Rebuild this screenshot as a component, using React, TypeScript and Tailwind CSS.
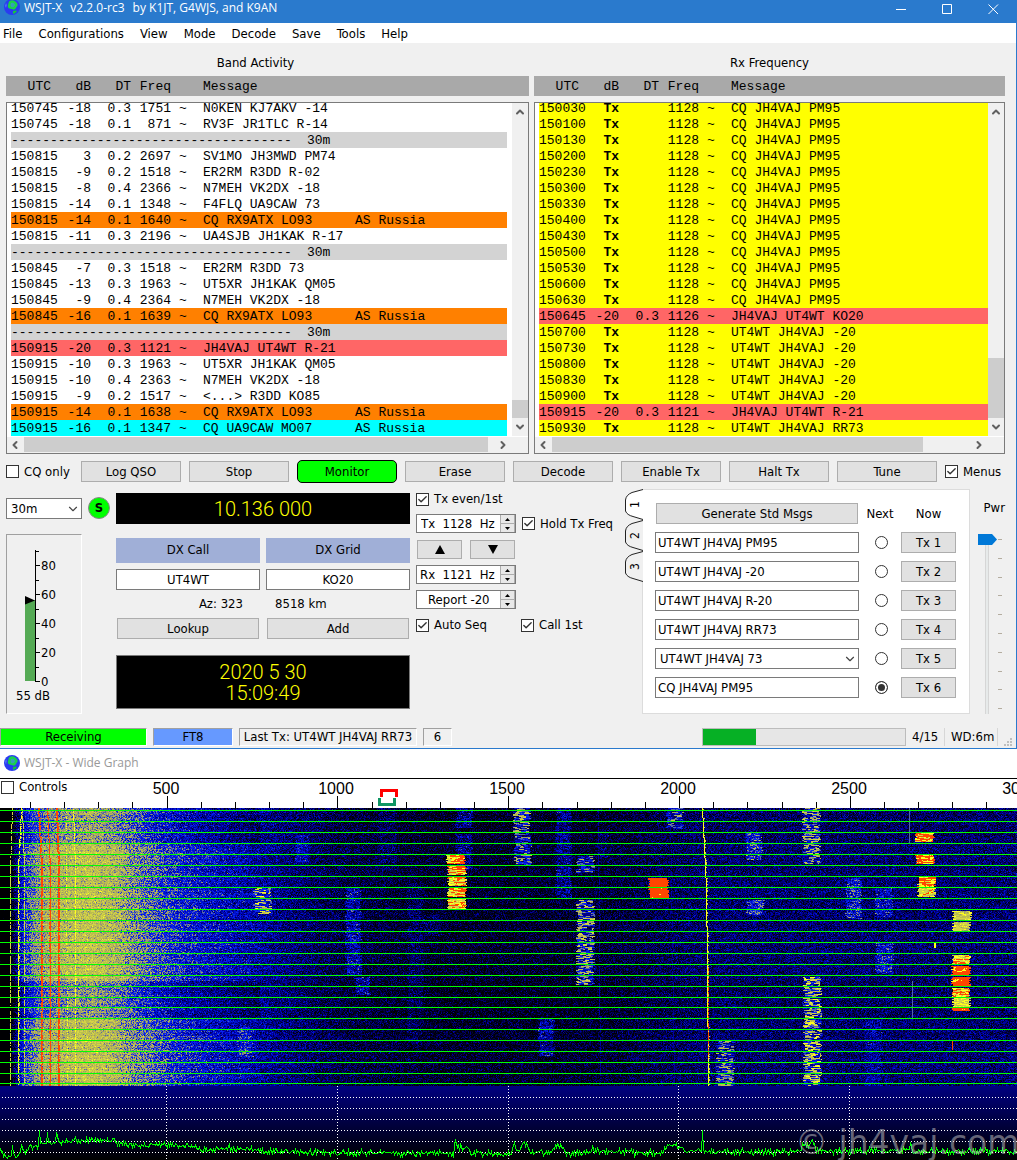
import { useMemo } from "react";
import type { ReactNode } from "react";
import { Check, ChevronDown, ChevronLeft, ChevronRight, ChevronUp } from "lucide-react";
import clsx from "clsx";

type Decode = {
  utc: string;
  db: string;
  dt: string;
  freq: string;
  msg: string;
  country?: string;
  tone?: "cq" | "mine" | "new" | "tx";
};

const BAND: (Decode | null)[] = [
  { utc: "150745", db: "-18", dt: "0.3", freq: "1751", msg: "N0KEN KJ7AKV -14" },
  { utc: "150745", db: "-18", dt: "0.1", freq: "871", msg: "RV3F JR1TLC R-14" },
  null,
  { utc: "150815", db: "3", dt: "0.2", freq: "2697", msg: "SV1MO JH3MWD PM74" },
  { utc: "150815", db: "-9", dt: "0.2", freq: "1518", msg: "ER2RM R3DD R-02" },
  { utc: "150815", db: "-8", dt: "0.4", freq: "2366", msg: "N7MEH VK2DX -18" },
  { utc: "150815", db: "-14", dt: "0.1", freq: "1348", msg: "F4FLQ UA9CAW 73" },
  { utc: "150815", db: "-14", dt: "0.1", freq: "1640", msg: "CQ RX9ATX LO93", country: "AS Russia", tone: "cq" },
  { utc: "150815", db: "-11", dt: "0.3", freq: "2196", msg: "UA4SJB JH1KAK R-17" },
  null,
  { utc: "150845", db: "-7", dt: "0.3", freq: "1518", msg: "ER2RM R3DD 73" },
  { utc: "150845", db: "-13", dt: "0.3", freq: "1963", msg: "UT5XR JH1KAK QM05" },
  { utc: "150845", db: "-9", dt: "0.4", freq: "2364", msg: "N7MEH VK2DX -18" },
  { utc: "150845", db: "-16", dt: "0.1", freq: "1639", msg: "CQ RX9ATX LO93", country: "AS Russia", tone: "cq" },
  null,
  { utc: "150915", db: "-20", dt: "0.3", freq: "1121", msg: "JH4VAJ UT4WT R-21", tone: "mine" },
  { utc: "150915", db: "-10", dt: "0.3", freq: "1963", msg: "UT5XR JH1KAK QM05" },
  { utc: "150915", db: "-10", dt: "0.4", freq: "2363", msg: "N7MEH VK2DX -18" },
  { utc: "150915", db: "-9", dt: "0.2", freq: "1517", msg: "<...> R3DD KO85" },
  { utc: "150915", db: "-14", dt: "0.1", freq: "1638", msg: "CQ RX9ATX LO93", country: "AS Russia", tone: "cq" },
  { utc: "150915", db: "-16", dt: "0.1", freq: "1347", msg: "CQ UA9CAW MO07", country: "AS Russia", tone: "new" },
];

const tx = (utc: string, msg: string): Decode => ({ utc, db: "Tx", dt: "", freq: "1128", msg, tone: "tx" });

const RX: Decode[] = [
  ...["150030", "150100", "150130", "150200", "150230", "150300", "150330", "150400", "150430", "150500", "150530", "150600", "150630"].map(
    (t) => tx(t, "CQ JH4VAJ PM95"),
  ),
  { utc: "150645", db: "-20", dt: "0.3", freq: "1126", msg: "JH4VAJ UT4WT KO20", tone: "mine" },
  ...["150700", "150730", "150800", "150830", "150900"].map((t) => tx(t, "UT4WT JH4VAJ -20")),
  { utc: "150915", db: "-20", dt: "0.3", freq: "1121", msg: "JH4VAJ UT4WT R-21", tone: "mine" },
  tx("150930", "UT4WT JH4VAJ RR73"),
];

const TONES = {
  cq: "bg-[#ff8000]",
  mine: "bg-[#ff6666]",
  new: "bg-[#00ffff]",
  tx: "bg-[#ffff00]",
};

const MONO = "font-['Liberation_Mono',monospace] text-[13px]";
const BTN = "h-[21px] border border-[#adadad] bg-[#e1e1e1] text-center leading-[19px] whitespace-nowrap";
const FIELD = "h-[21px] border border-[#7a7a7a] bg-white";

function Cols() {
  return (
    <colgroup>
      <col className="w-12" />
      <col className="w-8" />
      <col className="w-10" />
      <col className="w-10" />
      <col className="w-8" />
      <col className="w-[104px]" />
      <col className="w-12" />
      <col />
    </colgroup>
  );
}

function ListHeader() {
  return (
    <div className="h-5 bg-[#a9a9a9] pl-[5px]">
      <table className={clsx(MONO, "w-full table-fixed leading-[22px]")}>
        <Cols />
        <thead>
          <tr>
            <th className="pr-2 text-right font-normal">UTC</th>
            <th className="text-right font-normal">dB</th>
            <th className="text-right font-normal">DT</th>
            <th className="text-right font-normal">Freq</th>
            <th />
            <th className="text-left font-normal" colSpan={3}>Message</th>
          </tr>
        </thead>
      </table>
    </div>
  );
}

function DecodeTable({ rows }: { rows: (Decode | null)[] }) {
  return (
    <table className={clsx(MONO, "w-full table-fixed leading-[14px] whitespace-pre [&_td]:pt-0.5")}>
      <Cols />
      <tbody>
        {rows.map((r, i) =>
          r ? (
            <tr key={i} className={clsx("h-4", r.tone && TONES[r.tone])}>
              <td>{r.utc}</td>
              <td className={clsx("text-right", r.db === "Tx" && "font-bold")}>{r.db}</td>
              <td className="text-right">{r.dt}</td>
              <td className="text-right">{r.freq}</td>
              <td className="pl-2">~</td>
              {r.country ? (
                <>
                  <td colSpan={2}>{r.msg}</td>
                  <td>{r.country}</td>
                </>
              ) : (
                <td colSpan={3}>{r.msg}</td>
              )}
            </tr>
          ) : (
            <tr key={i} className="h-4 bg-[#d3d3d3]">
              <td colSpan={6}>{"-".repeat(36)}</td>
              <td colSpan={2}>30m</td>
            </tr>
          ),
        )}
      </tbody>
    </table>
  );
}

type ListProps = { title: string; rows: (Decode | null)[]; pad: string; titlePad?: string; vThumb: string; hThumb: string };

function ListPanel({ title, rows, pad, titlePad, vThumb, hThumb }: ListProps) {
  return (
    <section className="flex flex-col">
      <h2 className={clsx("h-[33px] pt-2.5 text-center leading-5", titlePad)}>{title}</h2>
      <ListHeader />
      <div className="mt-1.5 h-[352px] border border-[#7a7a7a] bg-white">
        <div className="flex h-[333px]">
          <div className={clsx("flex flex-1 flex-col justify-end overflow-hidden pl-1", pad)}>
            <DecodeTable rows={rows} />
          </div>
          <div className="flex w-4 flex-col items-center bg-[#f0f0f0] text-[#606060]">
            <ChevronUp className="mt-[3px] size-3 shrink-0" strokeWidth={4} />
            <div className="w-full flex-1" />
            <div className={clsx("w-full bg-[#cdcdcd]", vThumb)} />
            <ChevronDown className="my-[3px] size-3 shrink-0" strokeWidth={4} />
          </div>
        </div>
        <div className="mt-px flex h-4 items-center bg-[#f0f0f0] text-[#606060]">
          <ChevronLeft className="mr-[3px] ml-0.5 size-3 shrink-0" strokeWidth={4} />
          <div className="flex h-full flex-1">
            <div className={clsx("h-[15px] bg-[#cdcdcd]", hThumb)} />
          </div>
          <ChevronRight className="mr-[19px] ml-1 size-3 shrink-0" strokeWidth={4} />
        </div>
      </div>
    </section>
  );
}

function Tick({ label, checked }: { label: string; checked?: boolean }) {
  return (
    <label className="flex h-4 items-center gap-[5px] leading-4 whitespace-nowrap">
      <span className="relative size-[13px]">
        <input
          type="checkbox"
          defaultChecked={checked}
          className="peer block size-[13px] appearance-none border border-[#333] bg-white"
        />
        <Check className="pointer-events-none absolute top-px left-px hidden size-[11px] text-[#333] peer-checked:block" strokeWidth={3} />
      </span>
      {label}
    </label>
  );
}

function Drop({ value, label, className }: { value: string; label: string; className?: string }) {
  return (
    <span className={clsx("relative block", className)}>
      <select aria-label={label} className={clsx(FIELD, "block w-full appearance-none pl-1 leading-[19px]")}>
        <option>{value}</option>
      </select>
      <ChevronDown className="pointer-events-none absolute top-1 right-0.5 size-3.5 text-[#444]" strokeWidth={2} />
    </span>
  );
}

function Spin({ value, label, className }: { value: string; label: string; className?: string }) {
  return (
    <div className="flex h-[19px] w-[100px] border border-[#7a7a7a] bg-white">
      <input aria-label={label} defaultValue={value} className={clsx("w-20 min-w-0 flex-1 bg-transparent leading-4", className)} />
      <div className="flex w-[15px] flex-col border-r border-l border-[#adadad] bg-[#e8e8e8]">
        <button aria-label={`${label} up`} className="grid flex-1 place-items-center border-b border-[#adadad]">
          <svg width="5" height="3" className="block"><path d="M0 3L2.500 0L5 3Z" /></svg>
        </button>
        <button aria-label={`${label} down`} className="grid flex-1 place-items-center">
          <svg width="5" height="3" className="block"><path d="M0 0L2.500 3L5 0Z" /></svg>
        </button>
      </div>
    </div>
  );
}

function Globe({ className }: { className?: string }) {
  return (
    <svg viewBox="0 0 16 16" className={className}>
      <circle cx="8" cy="8" r="8" fill="#2a3cf0" />
      <path d="M5 2.500Q9 0 12 3Q15 6 12.500 8Q11 12 8 10Q3 10 4 6Z" fill="#19d24b" />
      <path d="M7 4Q10 3 11 6Q10 9 7 8Q6 6 7 4Z" fill="#35a0b4" />
      <path d="M9 12Q12 11 13 12Q11 15 9 15Z" fill="#14c83c" />
      <path d="M2 4Q3 6 2 9Q1 7 2 4Z" fill="#6ea0ff" />
    </svg>
  );
}

function WindowButton({ label, d }: { label: string; d: string }) {
  return (
    <button aria-label={label} className="h-[15px] w-[46px] pl-[18px]">
      <svg width="11" height="11" className="block" fill="none" stroke="#fff">
        <path d={d} />
      </svg>
    </button>
  );
}

function Meter() {
  const scale = [80, 60, 40, 20, 0];
  return (
    <div className="h-[180px] border border-t-[#a0a0a0] border-r-white border-b-white border-l-[#a0a0a0]">
      <svg width="74" height="153" className="block text-[13px]">
        <rect x="18" y="65" width="10" height="81" fill="#55aa55" />
        <path d="M18 61L28 65.500L18 69.500Z" />
        <path d="M28.500 15V146.500" stroke="#000" />
        {Array.from({ length: 10 }, (_, i) => (
          <path key={i} d={`M28 ${Math.round(146 - i * 14.5) + 0.5}h${i % 2 ? 4 : 5}`} stroke="#000" />
        ))}
        {scale.map((v) => (
          <text key={v} x="34" y={Math.round(151 - v * 1.45)}>{v}</text>
        ))}
      </svg>
      <p className="pl-[9px] leading-4">55 dB</p>
    </div>
  );
}

function Tab({ n, active }: { n: number; active?: boolean }) {
  return (
    <button role="tab" aria-selected={!!active} className="relative block h-[31px] w-[18px]">
      <svg viewBox="0 0 18 31" className="absolute inset-0">
        <path d="M18 0.500L7 3.500Q1 6 0.500 11V22Q2 26 8 27.500L18 30.500" fill={active ? "#fff" : "#f0f0f0"} stroke="#222" />
      </svg>
      <span className="absolute inset-0 grid -rotate-90 place-items-center text-xs">{n}</span>
    </button>
  );
}

const MESSAGES = ["UT4WT JH4VAJ PM95", "UT4WT JH4VAJ -20", "UT4WT JH4VAJ R-20", "UT4WT JH4VAJ RR73", "UT4WT JH4VAJ 73", "CQ JH4VAJ PM95"];

function TxPanel() {
  return (
    <div className="flex">
      <div role="tablist" aria-orientation="vertical" className="w-[17px]">
        <Tab n={1} active />
        <Tab n={2} />
        <Tab n={3} />
      </div>
      <div className="h-[225px] flex-1 border border-[#dcdcdc] bg-white pt-[13px] pr-[13px] pl-3">
        <div className="grid grid-cols-[1fr_42px_55px] items-center gap-y-2">
          <button className={clsx(BTN, "mx-px")}>Generate Std Msgs</button>
          <span className="text-center leading-5">Next</span>
          <span className="text-center leading-5">Now</span>
          {MESSAGES.map((m, i) => (
            <div key={m} className="contents">
              {i === 4 ? (
                <Drop value={m} label="Tx 5 message" />
              ) : (
                <input aria-label={`Tx ${i + 1} message`} defaultValue={m} className={clsx(FIELD, "w-full pl-0.5")} />
              )}
              <input
                type="radio"
                name="next"
                aria-label={`Tx ${i + 1} next`}
                defaultChecked={i === 5}
                className="ml-[3px] size-[13px] appearance-none justify-self-center rounded-full border border-[#333] bg-white checked:bg-[#333] checked:shadow-[inset_0_0_0_2px_#fff]"
              />
              <button className={BTN}>Tx {i + 1}</button>
            </div>
          ))}
        </div>
      </div>
    </div>
  );
}

function Power() {
  return (
    <div className="flex flex-col items-end pt-[9px]">
      <span className="leading-5">Pwr</span>
      <svg width="30" height="196" className="block">
        <rect x="10.500" y="18.500" width="3" height="178" fill="#e7eaea" stroke="#d6d6d6" />
        <path d="M3 16h14l5 5.500l-5 5.500h-14Z" fill="#0078d7" />
        {Array.from({ length: 10 }, (_, i) => (
          <path key={i} d={`M23 ${Math.round(21 + i * 18.8) + 0.5}h4`} stroke="#b4ada0" />
        ))}
      </svg>
    </div>
  );
}

const STATUS = "h-[18px] border border-t-[#a0a0a0] border-r-white border-b-white border-l-[#a0a0a0] text-center leading-4 whitespace-nowrap";

function StatusBar() {
  return (
    <footer className="flex h-[21px] items-start gap-1.5 pt-px pr-[3px]">
      <div className={clsx(STATUS, "w-[147px] bg-[#00ff00]")}>Receiving</div>
      <div className={clsx(STATUS, "w-20 bg-[#6699ff]")}>FT8</div>
      <div className={clsx(STATUS, "w-[178px]")}>Last Tx: UT4WT JH4VAJ RR73</div>
      <div className={clsx(STATUS, "w-[29px]")}>6</div>
      <div className="h-[18px] flex-1" />
      <div role="progressbar" aria-valuenow={4} aria-valuemax={15} className="h-[18px] w-[204px] border border-[#bcbcbc] bg-[#e6e6e6]">
        <div className="h-full w-[26%] bg-[#06b025]" />
      </div>
      <span className="w-[33px] border-r border-[#d7d7d7] leading-[18px]">4/15</span>
      <span className="w-[47px] border-r border-[#d7d7d7] leading-[18px] whitespace-nowrap">WD:6m</span>
      <svg width="9" height="9" className="mt-2.5 block" fill="#bfbfbf">
        <path d="M6 0h2v2h-2zM3 3h2v2h-2zM6 3h2v2h-2zM0 6h2v2h-2zM3 6h2v2h-2zM6 6h2v2h-2z" />
      </svg>
    </footer>
  );
}

const W = 1017;
const H = 278;

function rng(seed: number) {
  let a = seed;
  return () => {
    a = (a + 0x6d2b79f5) | 0;
    let t = Math.imul(a ^ (a >>> 15), 1 | a);
    t = (t + Math.imul(t ^ (t >>> 7), 61 | t)) ^ t;
    return ((t ^ (t >>> 14)) >>> 0) / 4294967296;
  };
}

function lerp(points: number[][], x: number) {
  for (let i = 1; i < points.length; i++) {
    const [x0, y0] = points[i - 1];
    const [x1, y1] = points[i];
    if (x <= x1) return y0 + ((x - x0) / (x1 - x0)) * (y1 - y0);
  }
  return points[points.length - 1][1];
}

// level -> colour, first entry whose limit is above the level wins
const PALETTE: [number, string][] = [
  [0.1, "#000003"],
  [0.17, "#00001e"],
  [0.24, "#000046"],
  [0.31, "#000078"],
  [0.38, "#0000a5"],
  [0.46, "#0012cd"],
  [0.54, "#0a23ee"],
  [0.6, "#5566aa"],
  [0.67, "#999970"],
  [0.77, "#bcbc50"],
  [0.88, "#d4d446"],
  [0.98, "#ffff1e"],
  [9, "#ff4600"],
];

const FLOOR = [
  [0, -0.1], [8, -0.1], [12, 0.15], [18, 0.35], [24, 0.5], [35, 0.62], [50, 0.7], [90, 0.75], [115, 0.7], [135, 0.62],
  [160, 0.53], [185, 0.46], [230, 0.39], [280, 0.29], [340, 0.2], [450, 0.15], [600, 0.16], [700, 0.25], [1017, 0.26],
];

// x0, x1, y0, y1, strength
const SIGNALS = [
  [253, 270, 80, 106, 0.68], [295, 308, 27, 54, 0.16], [237, 252, 219, 249, 0.16],
  [446, 464, 47, 56, 1], [447, 465, 58, 67, 1], [447, 465, 69, 78, 0.98], [447, 465, 80, 89, 1], [447, 465, 91, 101, 0.96],
  [513, 529, 0, 24, 0.62], [514, 530, 25, 57, 0.55], [455, 471, 0, 20, 0.22], [455, 471, 26, 62, 0.2], [378, 395, 0, 63, 0.09],
  [555, 570, 0, 90, 0.2], [576, 593, 48, 65, 0.5], [576, 593, 92, 177, 0.62], [648, 667, 70, 79, 1.3], [648, 667, 80, 90, 1.25],
  [666, 682, 0, 21, 0.53], [345, 360, 80, 167, 0.22], [355, 369, 169, 187, 0.24], [538, 553, 211, 248, 0.25],
  [407, 422, 75, 235, 0.09], [423, 440, 107, 128, 0.1], [596, 607, 22, 50, 0.12],
  [802, 819, 0, 56, 0.6], [803, 820, 169, 278, 0.7], [745, 761, 25, 52, 0.3], [746, 763, 92, 107, 0.3],
  [915, 933, 25, 34, 1.05], [915, 933, 47, 56, 1.15], [917, 934, 69, 79, 1.05], [917, 934, 80, 89, 0.92],
  [952, 970, 103, 112, 0.86], [952, 969, 114, 123, 0.82], [952, 969, 147, 156, 0.96], [951, 969, 158, 167, 1.2],
  [951, 969, 169, 178, 1.2], [952, 969, 180, 189, 1], [952, 969, 190, 199, 0.88], [951, 968, 200, 203, 1.2],
  [845, 860, 70, 111, 0.25], [875, 892, 80, 109, 0.2], [875, 892, 135, 166, 0.22], [864, 880, 210, 278, 0.1],
  [716, 733, 233, 278, 0.54],
];

// carriers: [y, x] points, chance of a lit pixel, level
const CARRIERS: [number[][], number, number][] = [
  [[[0, 12], [30, 11], [60, 10], [278, 10]], 0.8, 0.8],
  [[[0, 21], [60, 18], [278, 18]], 0.9, 0.9],
  [[[0, 22], [60, 19], [278, 19]], 0.4, 0.8],
  [[[0, 22], [60, 24], [278, 24]], 0.75, 0.85],
  [[[0, 38], [58, 41], [278, 41]], 0.95, 1],
  [[[0, 39], [58, 42], [278, 42]], 0.75, 1],
  [[[0, 47], [60, 50], [278, 50]], 1, 1],
  [[[0, 48], [60, 49], [278, 49]], 0.4, 1],
  [[[0, 56], [58, 58], [278, 58]], 0.95, 1],
  [[[0, 57], [58, 59], [278, 59]], 0.75, 1],
  [[[0, 73], [60, 75], [278, 75]], 0.7, 0.92],
  [[[0, 66], [278, 67]], 0.3, 0.9],
  [[[0, 91], [278, 92]], 0.3, 0.85],
  [[[0, 702], [79, 706], [159, 707], [278, 708]], 1, 0.9],
  [[[0, 703], [79, 707], [159, 708], [278, 709]], 0.3, 0.85],
  [[[0, 598], [278, 600]], 0.7, 0.36],
  [[[0, 670], [278, 674]], 0.7, 0.36],
];

const GRID_ROWS = [...Array.from({ length: 18 }, (_, i) => 2 + i * 11), 199, 210, 221, 232, 243, 254, 265, 275];

function waterfallPaths() {
  const rand = rng(7);
  const out = PALETTE.map(() => [] as string[]);
  const rowLevel = new Float32Array(W);
  for (let y = 0; y < H; y++) {
    const quiet = y < 35 ? 0.09 : y > 172 && y < 210 ? 0.11 : 0;
    const jitter = (rand() - 0.5) * 0.07;
    for (let x = 0; x < W; x++) {
      const left = x < 260 ? 1 : 0.2;
      const noise = (rand() + rand() - 1) * (x > 30 && x < 120 ? 0.17 : 0.22);
      rowLevel[x] = lerp(FLOOR, x) - (quiet - jitter) * left + noise;
    }
    for (const [x0, x1, y0, y1, s] of SIGNALS) {
      if (y < y0 || y >= y1) continue;
      const edge = Math.floor(rand() * 3);
      let run = 0;
      let v = 0;
      for (let x = x0 + edge; x < x1 + edge; x++) {
        if (run-- <= 0) {
          run = 1 + Math.floor(rand() * 4);
          v = s > 0.7 ? s * (0.78 + rand() * 0.32) : s * (0.3 + rand() * 1.05);
        }
        rowLevel[x] = Math.max(rowLevel[x], s > 0.4 ? v + (rand() - 0.5) * 0.06 : rowLevel[x] + v * 0.9);
      }
    }
    for (const [pts, chance, level] of CARRIERS) {
      if (rand() < chance) rowLevel[Math.round(lerp(pts, y))] = level;
    }
    if (y > 158 && y < 250 && rand() < 0.7) rowLevel[708] = 1;
    if (y < 35) rowLevel[909] = 0.58;
    if (y > 172 && y < 210) rowLevel[912] = 0.58;
    if (y > 134 && y < 140) rowLevel[934] = rowLevel[935] = 0.9;
    if (y > 232 && y < 242) rowLevel[952] = 1;

    let start = 0;
    let current = -1;
    for (let x = 0; x <= W; x++) {
      const next = x < W ? PALETTE.findIndex(([limit]) => rowLevel[x] < limit) : -1;
      if (next !== current) {
        if (current > 0) out[current].push(`M${start} ${y}h${x - start}`);
        start = x;
        current = next;
      }
    }
  }
  return out.map((p) => p.join(""));
}

const TRACE = [
  [0, 65], [6, 71], [11, 69], [12, 59], [13, 68], [19, 68], [21, 56], [23, 66], [30, 61], [38, 59], [39, 45], [40, 58], [46, 56],
  [47, 43], [48, 56], [55, 56], [56, 46], [58, 57], [75, 54], [110, 54], [135, 60], [165, 58], [190, 60], [205, 63], [235, 62],
  [265, 65], [330, 66], [453, 67], [455, 54], [457, 62], [467, 61], [470, 67], [511, 67], [513, 56], [516, 63], [521, 62], [524, 55],
  [530, 66], [552, 66], [555, 60], [562, 60], [566, 67], [590, 65], [592, 58], [594, 65], [662, 67], [666, 59], [680, 60], [684, 66],
  [701, 65], [702, 47], [703, 65], [800, 66], [803, 56], [808, 61], [812, 54], [816, 65], [908, 64], [910, 58], [912, 65], [1017, 65],
];

function tracePath() {
  const rand = rng(23);
  let d = "";
  for (let x = 0; x < W; x++) {
    const y = Math.round(lerp(TRACE, x) + (rand() + rand() - 1) * 4) + 0.5;
    d += `${x ? "L" : "M"}${x + 0.5} ${y}`;
  }
  return d;
}

function WideGraph() {
  const paths = useMemo(waterfallPaths, []);
  const trace = useMemo(tracePath, []);
  const majors = [166, 337, 508, 678, 849];
  return (
    <div className="relative">
      <svg viewBox="0 0 1017 29" className="block w-full font-['Liberation_Sans',sans-serif]" fontSize="16" textAnchor="middle">
        <rect width="1017" height="29" fill="#fff" />
        {[500, 1000, 1500, 2000, 2500, 3000].map((f, i) => (
          <text key={f} x={Math.round(165.500 + i * 170.8)} y="15">{f}</text>
        ))}
        {Array.from({ length: 29 }, (_, i) => (
          <path key={i} d={`M${Math.round(30 + i * 34.16) + 0.5} ${i % 5 === 4 ? 17 : 23}V29`} stroke="#000" />
        ))}
        <path d="M381.500 18V11.500H396.500V18" fill="none" stroke="#ff0000" strokeWidth="3" />
        <path d="M379.500 19V25.500H394.500V19" fill="none" stroke="#0f9664" strokeWidth="3" />
      </svg>
      <div className="absolute top-0 left-px">
        <Tick label="Controls" />
      </div>
      <svg viewBox="0 0 1017 278" className="block w-full" shapeRendering="crispEdges">
        <rect width="1017" height="278" fill={PALETTE[0][1]} />
        <g transform="translate(0 0.5)" fill="none">
          {paths.map((d, i) => d && <path key={i} d={d} stroke={PALETTE[i][1]} />)}
          {GRID_ROWS.map((y) => (
            <path key={y} d={`M0 ${y}H1017`} stroke="#00ff00" />
          ))}
        </g>
      </svg>
      <svg viewBox="0 0 1017 74" className="block w-full">
        <defs>
          <linearGradient id="sky" x1="0" y1="0" x2="0" y2="1">
            <stop offset="0" stopColor="#000080" />
            <stop offset="1" stopColor="#000000" />
          </linearGradient>
        </defs>
        <rect width="1017" height="74" fill="url(#sky)" />
        <g stroke="#fff" strokeDasharray="1 2" shapeRendering="crispEdges">
          {[11, 22, 33, 44, 55, 66].map((y) => (
            <path key={y} d={`M2 ${y + 0.5}H1017`} />
          ))}
          {majors.map((x) => (
            <path key={x} d={`M${x + 0.5} 0V74`} />
          ))}
        </g>
        <path d={trace} fill="none" stroke="#00ff00" shapeRendering="crispEdges" />
        <text x="795" y="68" fontSize="33" fill="#c8c8c8" fillOpacity="0.5" className="font-['DejaVu_Sans',sans-serif]">© jh4vaj.com</text>
      </svg>
    </div>
  );
}

function Caption({ children }: { children: ReactNode }) {
  return <div className="h-[25px] flex-1 bg-[#a0afd7] text-center leading-6">{children}</div>;
}

export default function App() {
  return (
    <main className="bg-white font-['DejaVu_Sans_Condensed','DejaVu_Sans',sans-serif] text-[13px] text-black">
      <div className="border-r border-b border-[#2a7acd] bg-[#f0f0f0]">
        <header className="flex h-[23px] items-start bg-[#2a7acd] text-white">
          <Globe className="-mt-px ml-1 size-4" />
          <h1 className="ml-1 flex flex-1 gap-2 font-['Open_Sans',sans-serif] text-xs leading-4">
            <span>WSJT-X</span>
            <span>v2.2.0-rc3</span>
            <span>by K1JT, G4WJS, and K9AN</span>
          </h1>
          <div className="flex pt-0.5">
            <WindowButton label="Minimize" d="M0 5.500H10" />
            <WindowButton label="Maximize" d="M0.500 0.500H9.500V9.500H0.500Z" />
            <WindowButton label="Close" d="M0.500 0.500L10 10M10 0.500L0.500 10" />
          </div>
        </header>
        <nav className="flex h-5 gap-4 bg-white pl-[3px] leading-[22px]">
          {["File", "Configurations", "View", "Mode", "Decode", "Save", "Tools", "Help"].map((m) => (
            <button key={m}>{m}</button>
          ))}
        </nav>

        <div className="grid grid-cols-[523fr_471fr] gap-x-[5px] pr-[11px] pl-1.5">
          <ListPanel title="Band Activity" rows={BAND} titlePad="pr-6" pad="pr-[5px]" vThumb="h-[18px]" hThumb="w-[99%]" />
          <ListPanel title="Rx Frequency" rows={RX} pad="" vThumb="h-[60px]" hThumb="w-[89%]" />
        </div>

        <div className="mt-[5px] flex h-[25px] items-center gap-2 pr-[11px] pl-1.5">
          <div className="w-[67px]"><Tick label="CQ only" /></div>
          <button className={clsx(BTN, "flex-1")}>Log QSO</button>
          <button className={clsx(BTN, "flex-1")}>Stop</button>
          <button className="h-[23px] flex-1 rounded-[5px] border border-black bg-[#00ff00] leading-5">Monitor</button>
          {["Erase", "Decode", "Enable Tx", "Halt Tx", "Tune"].map((b) => (
            <button key={b} className={clsx(BTN, "flex-1")}>{b}</button>
          ))}
          <div className="w-[60px]"><Tick label="Menus" checked /></div>
        </div>

        <div className="flex pt-[5px] pr-[11px] pb-[13px] pl-1.5">
          <div className="w-[104px]">
            <div className="flex items-center gap-1.5 pt-2">
              <Drop value="30m" label="Band" className="w-[76px]" />
              <button className="size-[22px] rounded-full border border-[#888] bg-[#00ff00] font-bold leading-5">S</button>
            </div>
            <div className="mt-[15px] w-[76px]"><Meter /></div>
          </div>

          <div className="ml-1.5 w-[294px] pt-1">
            <div className="h-[31px] bg-black text-center font-['Roboto',sans-serif] text-xl leading-8 font-light text-[#ffff00]">10.136 000</div>
            <div className="mt-3.5 flex gap-1.5">
              <Caption>DX Call</Caption>
              <Caption>DX Grid</Caption>
            </div>
            <div className="mt-1.5 flex gap-1.5">
              <input aria-label="DX Call" defaultValue="UT4WT" className={clsx(FIELD, "w-full text-center")} />
              <input aria-label="DX Grid" defaultValue="KO20" className={clsx(FIELD, "w-full text-center")} />
            </div>
            <div className="mt-1 flex gap-8 leading-5">
              <span className="w-[127px] text-right">Az: 323</span>
              <span>8518 km</span>
            </div>
            <div className="mt-1 flex gap-2 px-px">
              <button className={clsx(BTN, "flex-1")}>Lookup</button>
              <button className={clsx(BTN, "flex-1")}>Add</button>
            </div>
            <div className="mt-4 h-[54px] border border-[#7a7a7a] bg-black pt-1.5 text-center font-['Roboto',sans-serif] text-xl leading-[21px] font-light text-[#ffff00]">
              <p>2020 5 30</p>
              <p>15:09:49</p>
            </div>
          </div>

          <div className="ml-1.5 w-[205px] pt-0.5">
            <Tick label="Tx even/1st" checked />
            <div className="mt-[7px] flex items-center gap-1.5">
              <Spin value="Tx  1128  Hz" label="Tx frequency" className="pl-1" />
              <Tick label="Hold Tx Freq" checked />
            </div>
            <div className="mt-[7px] flex gap-2 pl-px">
              <button aria-label="Set Tx to Rx" className="grid h-[19px] w-[45px] place-items-center border border-[#adadad] bg-[#e1e1e1]">
                <svg width="10" height="9"><path d="M0 9L5 0L10 9Z" /></svg>
              </button>
              <button aria-label="Set Rx to Tx" className="grid h-[19px] w-[45px] place-items-center border border-[#adadad] bg-[#e1e1e1]">
                <svg width="10" height="9"><path d="M0 0L5 9L10 0Z" /></svg>
              </button>
            </div>
            <div className="mt-1.5"><Spin value="Rx  1121  Hz" label="Rx frequency" className="pl-[3px]" /></div>
            <div className="mt-1.5"><Spin value="Report -20" label="Report" className="pl-[11px]" /></div>
            <div className="mt-2 flex">
              <div className="w-[105px]"><Tick label="Auto Seq" checked /></div>
              <Tick label="Call 1st" checked />
            </div>
          </div>

          <div className="ml-1 flex-1"><TxPanel /></div>
          <div className="ml-[5px]"><Power /></div>
        </div>

        <StatusBar />
      </div>

      <div className="flex h-[29px] items-center gap-1 pb-0.5 pl-1">
        <Globe className="size-4" />
        <h2 className="font-['Open_Sans',sans-serif] text-xs text-[#999]">WSJT-X - Wide Graph</h2>
      </div>
      <div className="border-t border-black"><WideGraph /></div>
    </main>
  );
}
